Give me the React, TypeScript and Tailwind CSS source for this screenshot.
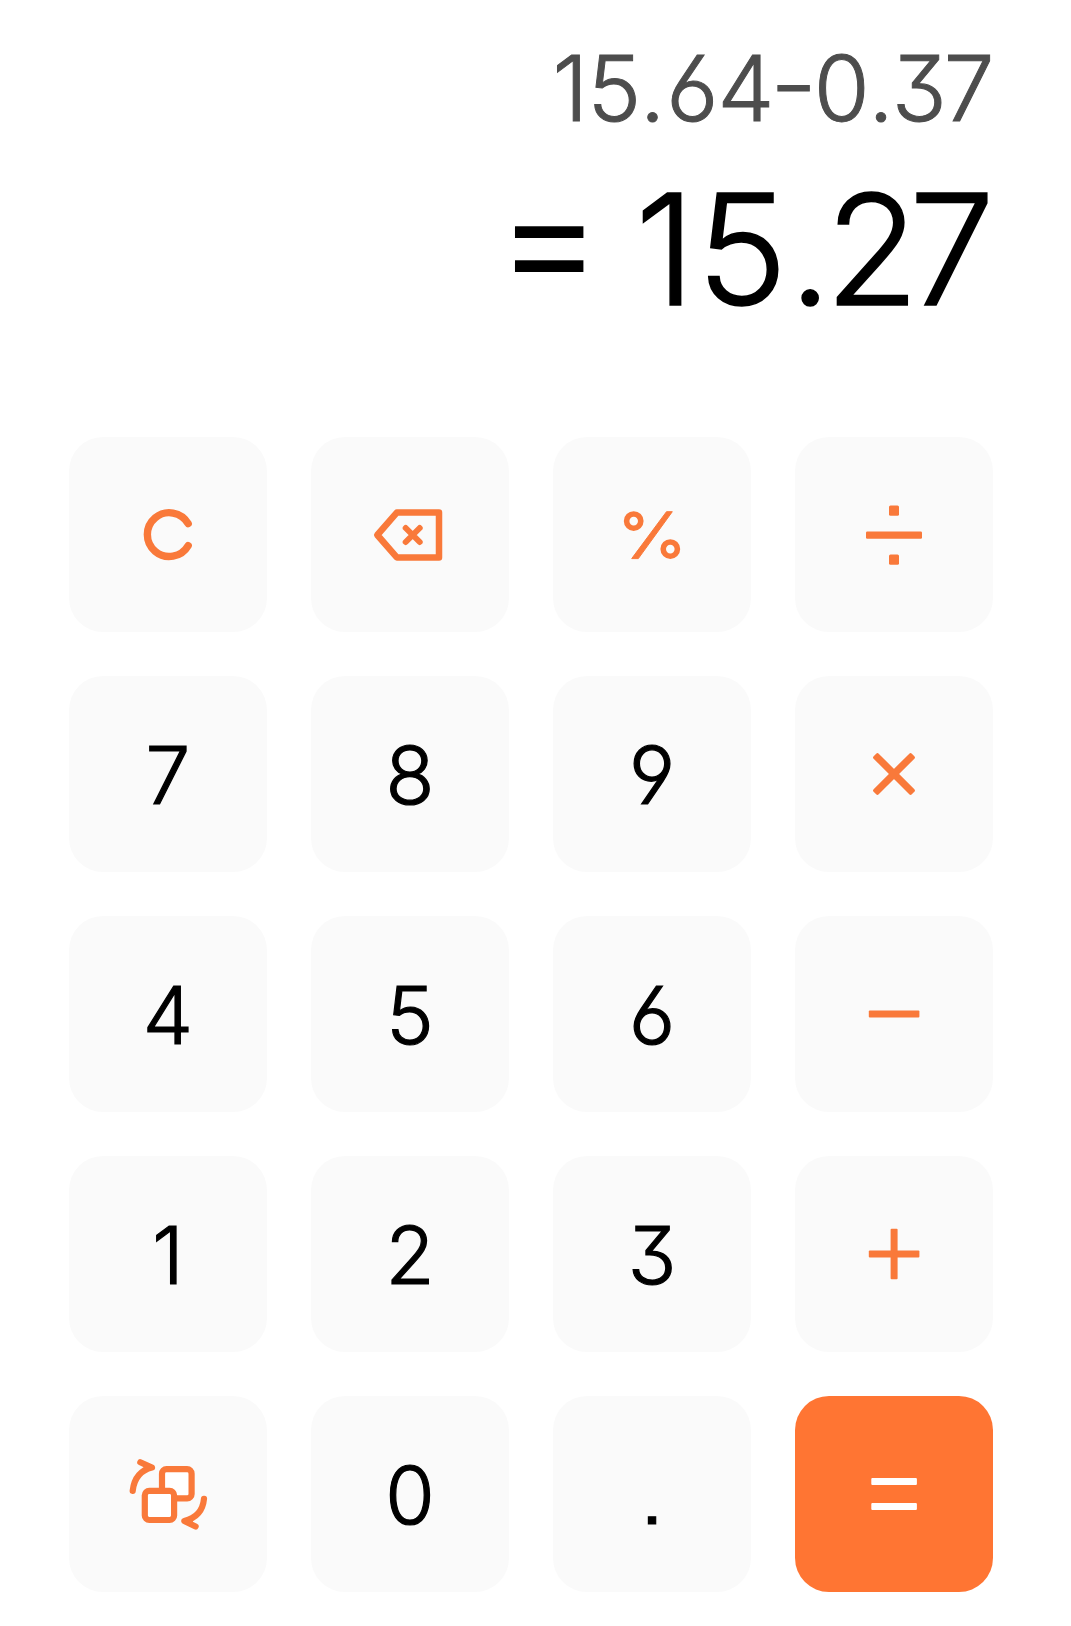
import type { ReactNode } from "react";
import clsx from "clsx";

const Icon = ({ children }: { children: ReactNode }) => (
  <svg viewBox="0 0 198 196" className="h-[196px] w-[198px] shrink-0" fill="none" stroke="none">
    {children}
  </svg>
);

const ClearIcon = () => (
  <Icon>
    <path d="M119.2 86.6A21.9 21.9 0 1 0 119.2 108.6" stroke="currentColor" strokeWidth="7.4" strokeLinecap="round" />
  </Icon>
);

const BackspaceIcon = () => (
  <Icon>
    <g stroke="currentColor" strokeLinecap="round" strokeLinejoin="round">
      <path d="M128 75.6H85.8L66.3 98L85.8 120.4H128Z" strokeWidth="6.5" />
      <path d="M94.7 91L108.7 105M108.7 91L94.7 105" strokeWidth="6" />
    </g>
  </Icon>
);

const PercentIcon = () => (
  <Icon>
    <circle cx="80.7" cy="84.1" r="7.1" stroke="currentColor" strokeWidth="5.6" />
    <circle cx="117.3" cy="112.1" r="7.1" stroke="currentColor" strokeWidth="5.6" />
    <path
      d="M113.5 74.7H119.3L85.3 121.6H78.7Z"
      fill="currentColor"
      stroke="currentColor"
      strokeWidth="1"
      strokeLinejoin="round"
    />
  </Icon>
);

const DivideIcon = () => (
  <Icon>
    <g fill="currentColor">
      <rect x="94" y="68.5" width="10" height="10.2" rx="1.5" />
      <rect x="71" y="94.5" width="56" height="7.3" rx="1.2" />
      <rect x="94" y="117.5" width="10" height="10.2" rx="1.5" />
    </g>
  </Icon>
);

const TimesIcon = () => (
  <Icon>
    <g fill="currentColor" transform="rotate(45 99 98)">
      <rect x="72" y="94.4" width="54" height="7.2" rx="1.8" />
      <rect x="95.4" y="71" width="7.2" height="54" rx="1.8" />
    </g>
  </Icon>
);

const MinusIcon = () => (
  <Icon>
    <rect x="73.8" y="94.4" width="50.6" height="7" rx="1" fill="currentColor" />
  </Icon>
);

const PlusIcon = () => (
  <Icon>
    <g fill="currentColor">
      <rect x="73.8" y="94.5" width="50.6" height="7" rx="1" />
      <rect x="95.6" y="72.7" width="7" height="50.6" rx="1" />
    </g>
  </Icon>
);

const EqualsIcon = () => (
  <Icon>
    <g fill="currentColor">
      <rect x="76.3" y="82" width="45.6" height="7" rx="1" />
      <rect x="76.3" y="107" width="45.6" height="7" rx="1" />
    </g>
  </Icon>
);

const SwitchIcon = () => (
  <Icon>
    <g stroke="currentColor" strokeWidth="6.2" strokeLinecap="round" strokeLinejoin="round">
      <rect x="93" y="73.2" width="29.6" height="29.2" rx="4.5" fill="white" />
      <rect x="75.8" y="94.8" width="29.3" height="29.2" rx="4.5" fill="white" />
      <path d="M63.7 94.8C65 83.5 71 74.5 83 71.6L71.3 66.2" />
      <path d="M135 102.8C134 113.5 128 122 115.3 125L126.6 130.5" />
      {/* solid heads */}
      <path d="M83 71.6L76 69L77 73.5Z" fill="currentColor" strokeWidth="4" />
      <path d="M115.3 125L122.3 127.6L121.3 123.1Z" fill="currentColor" strokeWidth="4" />
    </g>
  </Icon>
);

type Key = { label: string; icon?: ReactNode; primary?: boolean };

const keys: Key[] = [
  { label: "Clear", icon: <ClearIcon /> },
  { label: "Backspace", icon: <BackspaceIcon /> },
  { label: "Percent", icon: <PercentIcon /> },
  { label: "Divide", icon: <DivideIcon /> },
  { label: "7" },
  { label: "8" },
  { label: "9" },
  { label: "Times", icon: <TimesIcon /> },
  { label: "4" },
  { label: "5" },
  { label: "6" },
  { label: "Minus", icon: <MinusIcon /> },
  { label: "1" },
  { label: "2" },
  { label: "3" },
  { label: "Plus", icon: <PlusIcon /> },
  { label: "Switch", icon: <SwitchIcon /> },
  { label: "0" },
  { label: "." },
  { label: "Equals", icon: <EqualsIcon />, primary: true },
];

const App = () => {
  return (
    <main className="flex h-[1626px] w-[1071px] flex-col overflow-hidden bg-white font-['Inter',sans-serif] font-light">
      <div className="flex flex-col items-end whitespace-pre pt-[37.5px] [font-feature-settings:'cv03','cv04','cv09','case']">
        <div className="pr-[80.5px] text-[90.5px] leading-[100px] text-[#4d4d4d] [-webkit-text-stroke:1px_#4d4d4d]">
          <span className="tracking-[-0.5px]">1</span>
          <span className="tracking-[-1.5px]">5</span>
          <span className="tracking-[1px]">.</span>
          <span className="tracking-[-1px]">6</span>
          <span className="tracking-[-1.5px]">4</span>
          <span className="inline-block scale-x-[1.14] tracking-[0px]">-</span>
          <span className="tracking-[-1.5px]">0</span>
          <span className="tracking-[-2px]">.</span>
          <span className="tracking-[-3px]">3</span>
          <span className="tracking-[-4px]">7</span>
        </div>
        <div className="mt-[31.5px] pr-[82px] text-[153.5px] leading-[160px] text-black [-webkit-text-stroke:1.5px_black]">
          <span className="inline-block scale-[1.07] tracking-[-3.5px]">=</span>
          <span className="tracking-[-3.5px]"> </span>
          <span className="tracking-[1px]">1</span>
          <span className="tracking-[1px]">5</span>
          <span className="tracking-[-7px]">.</span>
          <span className="tracking-[-10px]">2</span>
          <span className="tracking-[-6px]">7</span>
        </div>
      </div>
      <div className="mt-[108px] grid grid-cols-[repeat(4,198px)] grid-rows-[195px_repeat(4,196px)] gap-[44px] pl-[69px]">
        {keys.map(({ label, icon, primary }) => (
          <button
            key={label}
            aria-label={label}
            className={clsx(
              "flex items-center justify-center rounded-[34px] text-[80px] leading-none [font-feature-settings:'cv03','cv04','cv09','ss07']",
              primary ? "bg-[#ff7533] text-white" : "bg-[#fafafa]",
              !primary && (icon ? "text-[#f9793a]" : "pt-[2px] text-black [-webkit-text-stroke:1.2px_black]")
            )}
          >
            {icon ?? label}
          </button>
        ))}
      </div>
    </main>
  );
};

export default App;
